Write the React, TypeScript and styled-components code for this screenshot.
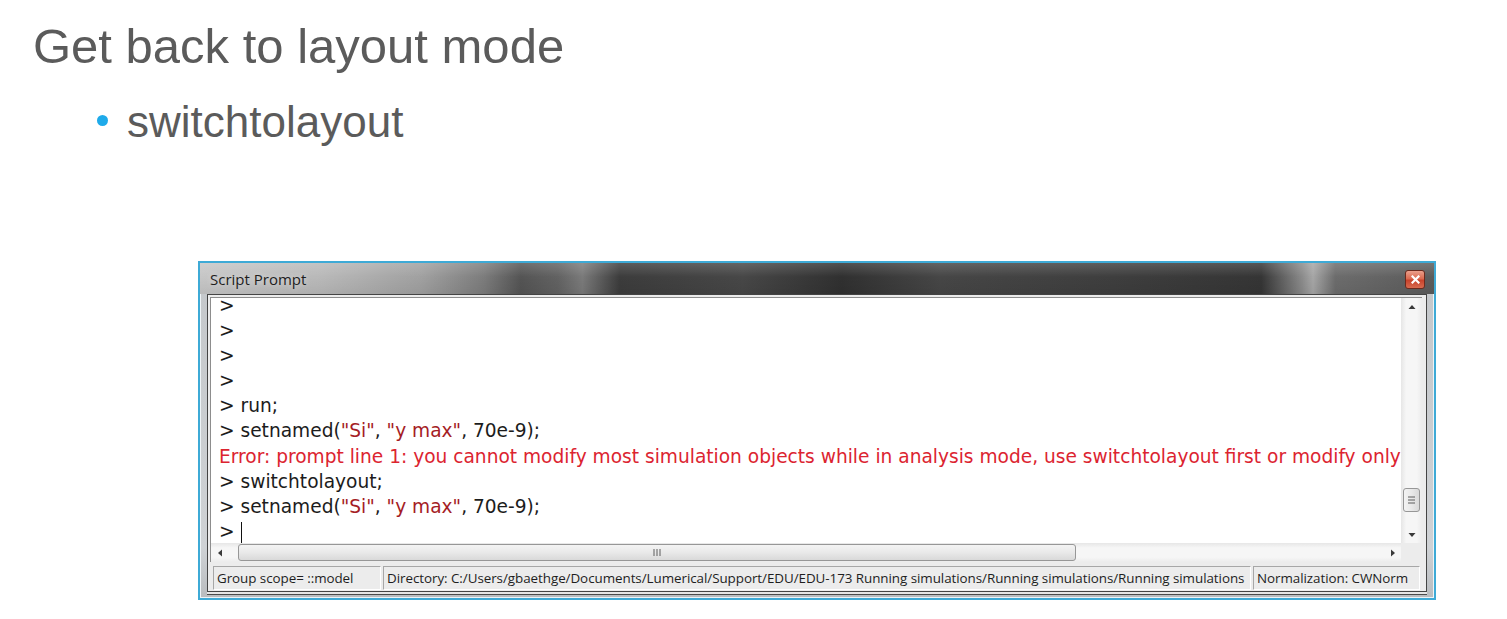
import React from 'react'
import styled, { createGlobalStyle } from 'styled-components'

const GlobalStyle = createGlobalStyle`
  html, body {
    margin: 0;
    padding: 0;
    background: #ffffff;
  }
  body {
    width: 1507px;
    height: 619px;
    overflow: hidden;
    font-family: 'Liberation Sans', Arial, sans-serif;
  }
`

const Slide = styled.div`
  display: flex;
  flex-direction: column;
  align-items: flex-start;
  padding: 22px 0 0 33px;
  height: 619px;
  box-sizing: border-box;
`

const Heading = styled.h1`
  margin: 0;
  font-size: 49px;
  line-height: 48px;
  font-weight: normal;
  color: #5b5b5b;
`

const BulletRow = styled.div`
  display: flex;
  align-items: flex-start;
  margin-top: 30px;
  padding-left: 64px;
`

const Dot = styled.span`
  width: 11px;
  height: 11px;
  border-radius: 50%;
  background: #1eaaea;
  margin-top: 15px;
  flex-shrink: 0;
`

const BulletText = styled.span`
  margin-left: 19px;
  font-size: 44px;
  line-height: 44px;
  color: #5b5b5b;
`

const Window = styled.div`
  margin: 117px 0 0 165px;
  width: 1238px;
  height: 339px;
  box-sizing: border-box;
  border: 2px solid #3eaad6;
  background: linear-gradient(to bottom, #c4c7ca, #cfd2d5 85%, #b9bcbf);
  box-shadow: inset 0 0 0 1px #eef3f6;
  display: flex;
  flex-direction: column;
`

const TitleBar = styled.div`
  height: 31px;
  flex-shrink: 0;
  display: flex;
  align-items: center;
  justify-content: space-between;
  padding: 0 9px 0 10px;
  background:
    linear-gradient(to bottom, rgba(255, 255, 255, 0.16), rgba(255, 255, 255, 0) 45%, rgba(0, 0, 0, 0.06)),
    linear-gradient(to right, #c6c6c6 0%, #b8b8b8 10%, #a0a0a0 18%, #7c7c7c 23%, #545454 26%, #626262 29%, #7a7a7a 31%, #3c3c3c 34%, #474747 44%, #303030 52%, #464646 60%, #3e3e3e 74%, #353535 86%, #8a8a8a 89.3%, #a6a6a6 90.2%, #6c6c6c 92%, #5b5b5b 100%);
`

const TitleText = styled.span`
  font-family: 'Open Sans', 'Noto Sans', sans-serif;
  font-size: 15px;
  color: #1e1e1e;
  text-shadow: 0 0 6px rgba(255, 255, 255, 0.6);
`

const CloseButton = styled.div`
  width: 20px;
  height: 19px;
  box-sizing: border-box;
  border: 1px solid #6b2a1e;
  border-radius: 3px;
  background: linear-gradient(to bottom, #eba08c 0%, #dc6a50 45%, #c8432c 55%, #d76a4f 100%);
  display: flex;
  align-items: center;
  justify-content: center;
  margin-top: 2px;
`

const Body = styled.div`
  flex: 1;
  display: flex;
  padding: 0 7px 6px 7px;
`

const ClientFrame = styled.div`
  flex: 1;
  display: flex;
  flex-direction: column;
  gap: 4px;
  border: 1px solid #444444;
  padding: 2px 4px 1px 2px;
  background: #ececec;
  box-shadow: 0 2px 0 0 #e6e6e6, 0 3px 0 0 #4a4a4a;
`

const Console = styled.div`
  height: 265px;
  box-sizing: border-box;
  display: grid;
  grid-template-columns: 1fr 21px;
  grid-template-rows: 1fr 19px;
  border-top: 1px solid #8d8d8d;
  border-left: 1px solid #8d8d8d;
  background: #ffffff;
`

const TextArea = styled.div`
  overflow: hidden;
  padding-left: 8px;
`

const Lines = styled.div`
  margin-top: -5px;
  font-family: 'DejaVu Sans', Verdana, sans-serif;
  font-size: 18.6px;
  line-height: 25.1px;
  color: #1c1c1c;
  white-space: pre;
`

const Line = styled.div<{ $error?: boolean }>`
  color: ${({ $error }) => ($error ? '#dc2430' : '#1c1c1c')};
`

const Str = styled.span`
  color: #a51d25;
`

const Caret = styled.span`
  display: inline-block;
  width: 1px;
  height: 21px;
  background: #111;
  vertical-align: -5px;
`

const VScroll = styled.div`
  display: flex;
  flex-direction: column;
  background: linear-gradient(to right, #e6e6e6, #f6f6f6 25%, #f6f6f6 75%, #ececec);
`

const HScroll = styled.div`
  display: flex;
  align-items: center;
  background: linear-gradient(to bottom, #e6e6e6, #f6f6f6 25%, #f6f6f6 75%, #ececec);
`

const ArrowButton = styled.div<{ $horizontal?: boolean }>`
  flex-shrink: 0;
  width: ${({ $horizontal }) => ($horizontal ? '17px' : '100%')};
  height: ${({ $horizontal }) => ($horizontal ? '100%' : '17px')};
  display: flex;
  align-items: center;
  justify-content: center;
`

const VTrack = styled.div`
  flex: 1;
  display: flex;
  flex-direction: column;
  justify-content: flex-end;
  align-items: center;
`

const VThumb = styled.div`
  width: 17px;
  height: 24px;
  box-sizing: border-box;
  margin-bottom: 14px;
  border: 1px solid #979797;
  border-radius: 3px;
  background: linear-gradient(to right, #f4f4f4, #e9e9e9 50%, #d9d9d9);
  display: flex;
  align-items: center;
  justify-content: center;
`

const HThumb = styled.div`
  width: 838px;
  height: 17px;
  box-sizing: border-box;
  margin-left: 10px;
  border: 1px solid #979797;
  border-radius: 3px;
  background: linear-gradient(to bottom, #f4f4f4, #e9e9e9 50%, #d9d9d9);
  display: flex;
  align-items: center;
  justify-content: center;
`

const Spacer = styled.div`
  flex: 1;
`

const Corner = styled.div`
  background: #ececec;
`

const StatusBar = styled.div`
  height: 24px;
  flex-shrink: 0;
  display: flex;
  gap: 2px;
  padding: 0 2px 0 3px;
`

const StatusPanel = styled.div<{ $width?: number }>`
  ${({ $width }) => ($width ? `width: ${$width}px;` : 'flex: 1;')}
  flex-shrink: 0;
  box-sizing: border-box;
  border: 1px solid;
  border-color: #a7a7a7 #ffffff #ffffff #a7a7a7;
  padding: 0 3px;
  display: flex;
  align-items: center;
  font-family: 'Open Sans', 'Noto Sans', sans-serif;
  font-size: 13.4px;
  letter-spacing: -0.05px;
  color: #1e1e1e;
  white-space: nowrap;
  overflow: hidden;
`

const Arrow = ({ dir }: { dir: 'up' | 'down' | 'left' | 'right' }) => {
  const points = {
    up: '0.5,5 4,1 7.5,5',
    down: '0.5,1 4,5 7.5,1',
    left: '5,0.5 1,4 5,7.5',
    right: '1,0.5 5,4 1,7.5'
  }[dir]
  const vertical = dir === 'up' || dir === 'down'
  return (
    <svg width={vertical ? 8 : 6} height={vertical ? 6 : 8} viewBox={vertical ? '0 0 8 6' : '0 0 6 8'}>
      <polygon points={points} fill='#3a3a3a' />
    </svg>
  )
}

const GripH = () => (
  <svg width='9' height='7' viewBox='0 0 9 7'>
    {[0.5, 3.5, 6.5].map((x) => (
      <line key={x} x1={x + 0.5} y1='0' x2={x + 0.5} y2='7' stroke='#5d5d5d' strokeWidth='1' />
    ))}
  </svg>
)

const GripV = () => (
  <svg width='7' height='9' viewBox='0 0 7 9'>
    {[0.5, 3.5, 6.5].map((y) => (
      <line key={y} x1='0' y1={y + 0.5} x2='7' y2={y + 0.5} stroke='#5d5d5d' strokeWidth='1' />
    ))}
  </svg>
)

const CloseIcon = () => (
  <svg width='9' height='9' viewBox='0 0 9 9'>
    <path d='M1.5 1.5 L7.5 7.5 M7.5 1.5 L1.5 7.5' stroke='#ffffff' strokeWidth='2.2' strokeLinecap='square' />
  </svg>
)

const SetNamed = () => (
  <Line>
    {'> setnamed('}<Str>"Si"</Str>{', '}<Str>"y max"</Str>{', 70e-9);'}
  </Line>
)

export default function App () {
  return (
    <>
      <GlobalStyle />
      <Slide>
        <Heading>Get back to layout mode</Heading>
        <BulletRow>
          <Dot />
          <BulletText>switchtolayout</BulletText>
        </BulletRow>
        <Window>
          <TitleBar>
            <TitleText>Script Prompt</TitleText>
            <CloseButton><CloseIcon /></CloseButton>
          </TitleBar>
          <Body>
            <ClientFrame>
              <Console>
                <TextArea>
                  <Lines>
                    <Line>{'>'}</Line>
                    <Line>{'>'}</Line>
                    <Line>{'>'}</Line>
                    <Line>{'>'}</Line>
                    <Line>{'> run;'}</Line>
                    <SetNamed />
                    <Line $error>Error: prompt line 1: you cannot modify most simulation objects while in analysis mode, use switchtolayout first or modify only</Line>
                    <Line>{'> switchtolayout;'}</Line>
                    <SetNamed />
                    <Line>{'> '}<Caret /></Line>
                  </Lines>
                </TextArea>
                <VScroll>
                  <ArrowButton><Arrow dir='up' /></ArrowButton>
                  <VTrack>
                    <VThumb><GripV /></VThumb>
                  </VTrack>
                  <ArrowButton><Arrow dir='down' /></ArrowButton>
                </VScroll>
                <HScroll>
                  <ArrowButton $horizontal><Arrow dir='left' /></ArrowButton>
                  <HThumb><GripH /></HThumb>
                  <Spacer />
                  <ArrowButton $horizontal><Arrow dir='right' /></ArrowButton>
                </HScroll>
                <Corner />
              </Console>
              <StatusBar>
                <StatusPanel $width={168}>Group scope= ::model</StatusPanel>
                <StatusPanel $width={868}>Directory: C:/Users/gbaethge/Documents/Lumerical/Support/EDU/EDU-173 Running simulations/Running simulations/Running simulations</StatusPanel>
                <StatusPanel>Normalization: CWNorm</StatusPanel>
              </StatusBar>
            </ClientFrame>
          </Body>
        </Window>
      </Slide>
    </>
  )
}
